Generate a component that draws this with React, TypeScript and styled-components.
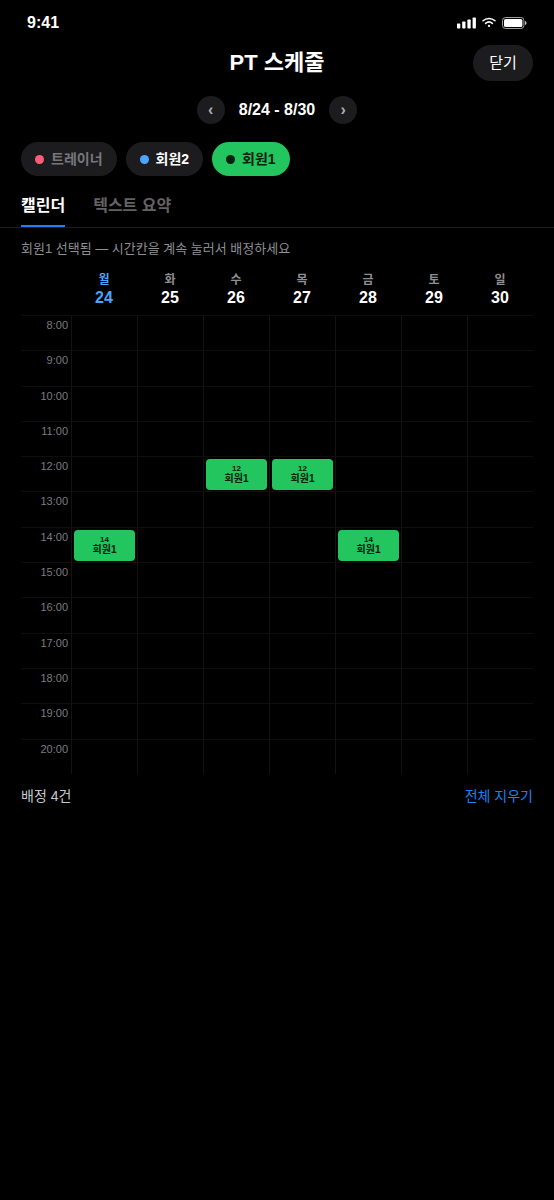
import React, { useState } from 'react';
import styled, { createGlobalStyle } from 'styled-components';

const GlobalStyle = createGlobalStyle`
  *, *::before, *::after { box-sizing: border-box; }
  body {
    margin: 0;
    min-height: 100vh;
    background: #000;
    color: #fff;
    font-family: "Liberation Sans", "Noto Sans CJK KR", sans-serif;
  }
  button { font: inherit; border: 0; padding: 0; margin: 0; cursor: pointer; }
`;

const Screen = styled.main`
  display: flex;
  flex-direction: column;
  min-height: 100vh;
  background: #000;
`;

const StatusBar = styled.div`
  display: flex;
  align-items: center;
  justify-content: space-between;
  height: 45px;
  padding: 0 27px;
  font-size: 16px;
  font-weight: 700;
  line-height: 20px;
`;

const StatusIcons = styled.div`
  display: flex;
  align-items: center;
  gap: 6px;
`;

const Header = styled.header`
  display: grid;
  grid-template-columns: 1fr auto 1fr;
  align-items: center;
  padding: 0 21px;
`;

const Title = styled.h1`
  grid-column: 2;
  margin: 0;
  font-size: 22px;
  line-height: 32px;
`;

const CloseButton = styled.button`
  justify-self: end;
  width: 60px;
  height: 36px;
  border-radius: 18px;
  background: #1c1c1e;
  color: #fff;
  font-size: 15px;
  line-height: 20px;
`;

const WeekNav = styled.nav`
  display: flex;
  align-items: center;
  justify-content: center;
  gap: 14px;
  margin-top: 15px;
`;

const RoundButton = styled.button`
  width: 28px;
  height: 28px;
  border-radius: 50%;
  background: #1c1c1e;
  color: #aeaeb2;
  font-size: 16px;
  font-weight: 700;
  line-height: 28px;
`;

const WeekRange = styled.span`
  font-size: 16px;
  font-weight: 700;
  line-height: 20px;
`;

const Chips = styled.div`
  display: flex;
  gap: 9px;
  margin-top: 18px;
  padding: 0 21px;
`;

const Chip = styled.button<{ $bg: string; $color: string }>`
  display: flex;
  align-items: center;
  gap: 7px;
  height: 34px;
  padding: 0 14px;
  border-radius: 17px;
  background: ${(p) => p.$bg};
  color: ${(p) => p.$color};
  font-size: 14px;
  font-weight: 700;
  line-height: 20px;
`;

const Dot = styled.span<{ $color: string }>`
  width: 9px;
  height: 9px;
  border-radius: 50%;
  background: ${(p) => p.$color};
`;

const Tabs = styled.div`
  display: flex;
  gap: 28px;
  margin-top: 14px;
  padding: 0 21px;
  border-bottom: 1px solid #1c1c1e;
`;

const Tab = styled.button<{ $active: boolean }>`
  height: 37px;
  padding-bottom: 8px;
  border-bottom: 2px solid ${(p) => (p.$active ? '#1f80f0' : 'transparent')};
  background: none;
  color: ${(p) => (p.$active ? '#fff' : '#636366')};
  font-size: 16px;
  font-weight: 700;
`;

const Hint = styled.p`
  margin: 11px 0 0;
  padding: 0 21px;
  color: #8e8e93;
  font-size: 13px;
  line-height: 20px;
`;

const Calendar = styled.div`
  margin-top: 12px;
  padding: 0 21px;
`;

const Table = styled.table`
  width: 100%;
  height: 503px;
  table-layout: fixed;
  border-collapse: separate;
  border-spacing: 0;
`;

const TimeColumn = styled.col`
  width: 50px;
`;

const DayHead = styled.th<{ $today: boolean }>`
  height: 44px;
  padding: 0;
  vertical-align: top;
  color: ${(p) => (p.$today ? '#4da3ff' : '#fff')};
`;

const DayName = styled.span<{ $today: boolean }>`
  display: block;
  color: ${(p) => (p.$today ? 'inherit' : '#8e8e93')};
  font-size: 12px;
  line-height: 18px;
`;

const DayNumber = styled.span`
  display: block;
  font-size: 16px;
  line-height: 18px;
`;

const TimeHead = styled.th`
  padding: 2px 3px 0 0;
  border-top: 1px solid #0e0e0f;
  color: #7c7c80;
  font-size: 11px;
  font-weight: 400;
  line-height: 14px;
  text-align: right;
  vertical-align: top;
`;

const Cell = styled.td`
  padding: 2px 2px 1px;
  border-top: 1px solid #0e0e0f;
  border-left: 1px solid #131314;
  vertical-align: top;
`;

const Slot = styled.button<{ $filled: boolean }>`
  display: flex;
  flex-direction: column;
  align-items: center;
  justify-content: center;
  width: 100%;
  height: 31px;
  border-radius: 4px;
  background: ${(p) => (p.$filled ? '#22c55e' : 'transparent')};
  color: #04200e;
  font-weight: 700;
`;

const SlotHour = styled.span`
  font-size: 8px;
  line-height: 9px;
`;

const SlotName = styled.span`
  font-size: 10px;
  line-height: 12px;
`;

const Footer = styled.footer`
  display: flex;
  align-items: center;
  justify-content: space-between;
  margin-top: 12px;
  padding: 0 21px;
  font-size: 14px;
  line-height: 20px;
`;

const Count = styled.span`
  color: #c7c7cc;
`;

const ClearButton = styled.button`
  background: none;
  color: #1f80f0;
`;

const days = [
  { name: '월', date: 24 },
  { name: '화', date: 25 },
  { name: '수', date: 26 },
  { name: '목', date: 27 },
  { name: '금', date: 28 },
  { name: '토', date: 29 },
  { name: '일', date: 30 },
];
const today = 24;
const hours = Array.from({ length: 13 }, (_, i) => i + 8);

const SignalIcon = () => (
  <svg width="19" height="12" viewBox="0 0 19 12" fill="#fff" aria-hidden="true">
    <rect x="0" y="6.4" width="3.3" height="5" rx="0.7" />
    <rect x="5.2" y="4.6" width="3.3" height="6.8" rx="0.7" />
    <rect x="10.4" y="2.6" width="3.3" height="8.8" rx="0.7" />
    <rect x="15.6" y="0.5" width="3.3" height="10.9" rx="0.7" />
  </svg>
);

const WifiIcon = () => (
  <svg width="14" height="11" viewBox="0 0 14 11" fill="none" stroke="#fff" strokeWidth="1.5" strokeLinecap="round" aria-hidden="true">
    <path d="M1 3.8C4.4 0.6 9.6 0.6 13 3.8" />
    <path d="M3.6 6.4C5.6 4.6 8.4 4.6 10.4 6.4" />
    <circle cx="7" cy="8.9" r="1.1" fill="#fff" stroke="none" />
  </svg>
);

const BatteryIcon = () => (
  <svg width="25" height="12" viewBox="0 0 25 12" aria-hidden="true">
    <rect x="0.5" y="0.5" width="21.4" height="11" rx="3" fill="none" stroke="#a0a0a0" />
    <rect x="2" y="2" width="18.4" height="8" rx="1.6" fill="#fff" />
    <path d="M23 4v4c0.9-0.3 1.5-1.1 1.5-2s-0.6-1.7-1.5-2z" fill="#c8c8c8" />
  </svg>
);

export default function App() {
  const [tab, setTab] = useState('calendar');
  const [booked, setBooked] = useState<string[]>(['24-14', '26-12', '27-12', '28-14']);

  const toggle = (key: string) =>
    setBooked((list) => (list.includes(key) ? list.filter((k) => k !== key) : [...list, key]));

  return (
    <Screen>
      <GlobalStyle />
      <StatusBar>
        <span>9:41</span>
        <StatusIcons>
          <SignalIcon />
          <WifiIcon />
          <BatteryIcon />
        </StatusIcons>
      </StatusBar>

      <Header>
        <Title>PT 스케줄</Title>
        <CloseButton type="button">닫기</CloseButton>
      </Header>

      <WeekNav>
        <RoundButton type="button">‹</RoundButton>
        <WeekRange>8/24 - 8/30</WeekRange>
        <RoundButton type="button">›</RoundButton>
      </WeekNav>

      <Chips>
        <Chip type="button" $bg="#1c1c1e" $color="#77777b">
          <Dot $color="#ff5c7a" />
          트레이너
        </Chip>
        <Chip type="button" $bg="#1c1c1e" $color="#fff">
          <Dot $color="#4da3ff" />
          회원2
        </Chip>
        <Chip type="button" $bg="#22c55e" $color="#04200e" aria-pressed="true">
          <Dot $color="#04200e" />
          회원1
        </Chip>
      </Chips>

      <Tabs role="tablist">
        <Tab type="button" role="tab" aria-selected={tab === 'calendar'} $active={tab === 'calendar'} onClick={() => setTab('calendar')}>
          캘린더
        </Tab>
        <Tab type="button" role="tab" aria-selected={tab === 'summary'} $active={tab === 'summary'} onClick={() => setTab('summary')}>
          텍스트 요약
        </Tab>
      </Tabs>

      <Hint>회원1 선택됨 — 시간칸을 계속 눌러서 배정하세요</Hint>

      <Calendar>
        <Table>
          <colgroup>
            <TimeColumn />
            {days.map((d) => (
              <col key={d.date} />
            ))}
          </colgroup>
          <thead>
            <tr>
              <td />
              {days.map((d) => (
                <DayHead key={d.date} scope="col" $today={d.date === today}>
                  <DayName $today={d.date === today}>{d.name}</DayName>
                  <DayNumber>{d.date}</DayNumber>
                </DayHead>
              ))}
            </tr>
          </thead>
          <tbody>
            {hours.map((h) => (
              <tr key={h}>
                <TimeHead scope="row">{h}:00</TimeHead>
                {days.map((d) => {
                  const key = `${d.date}-${h}`;
                  const filled = booked.includes(key);
                  return (
                    <Cell key={key}>
                      <Slot type="button" $filled={filled} aria-label={`${d.name} ${h}:00`} onClick={() => toggle(key)}>
                        {filled && (
                          <>
                            <SlotHour>{h}</SlotHour>
                            <SlotName>회원1</SlotName>
                          </>
                        )}
                      </Slot>
                    </Cell>
                  );
                })}
              </tr>
            ))}
          </tbody>
        </Table>
      </Calendar>

      <Footer>
        <Count>배정 {booked.length}건</Count>
        <ClearButton type="button" onClick={() => setBooked([])}>
          전체 지우기
        </ClearButton>
      </Footer>
    </Screen>
  );
}
